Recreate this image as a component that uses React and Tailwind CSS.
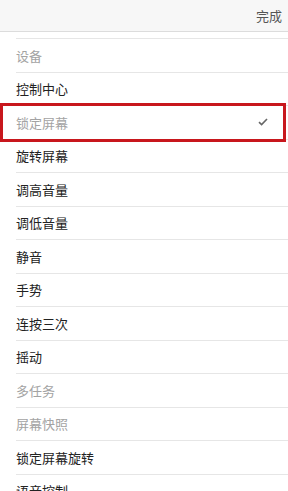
import React from "react";

const rows = [
  { label: "设备", muted: true },
  { label: "控制中心" },
  { label: "锁定屏幕", muted: true, checked: true, marked: true },
  { label: "旋转屏幕" },
  { label: "调高音量" },
  { label: "调低音量" },
  { label: "静音" },
  { label: "手势" },
  { label: "连按三次" },
  { label: "摇动" },
  { label: "多任务", muted: true },
  { label: "屏幕快照", muted: true },
  { label: "锁定屏幕旋转" },
  { label: "语音控制" },
];

const Row = ({ item }) => (
  <div className="relative h-[33.5px] pl-4">
    <div className="flex h-full items-center justify-between border-b border-[#e6e6e6] pr-4">
      <span className={`text-[13px] ${item.muted ? "text-[#a3a3a3]" : "text-[#222]"}`}>{item.label}</span>
      {item.checked && (
        <svg width="10" height="8" viewBox="0 0 10 8" className="mr-1">
          <path d="M1 4.2 L3.6 6.6 L9 1" fill="none" stroke="#666" strokeWidth="1.6" />
        </svg>
      )}
    </div>
    {/* red annotation box */}
    {item.marked && (
      <span className="pointer-events-none absolute left-0 right-[2px] top-[-3px] bottom-[-2px] border-[3px] border-[#c8171d]" />
    )}
  </div>
);

export default function App() {
  return (
    <div className="h-[491px] w-[288px] overflow-hidden bg-white font-['Noto_Sans_CJK_SC',sans-serif]">
      <div className="flex h-[32px] items-center justify-end border-b border-[#dcdcdc] bg-[#f7f7f7] pr-[6px]">
        <span className="text-[13px] text-[#555]">完成</span>
      </div>
      <div className="mt-[6px] border-t border-[#e6e6e6] ml-4" />
      {rows.map((item) => (
        <Row key={item.label} item={item} />
      ))}
    </div>
  );
}
